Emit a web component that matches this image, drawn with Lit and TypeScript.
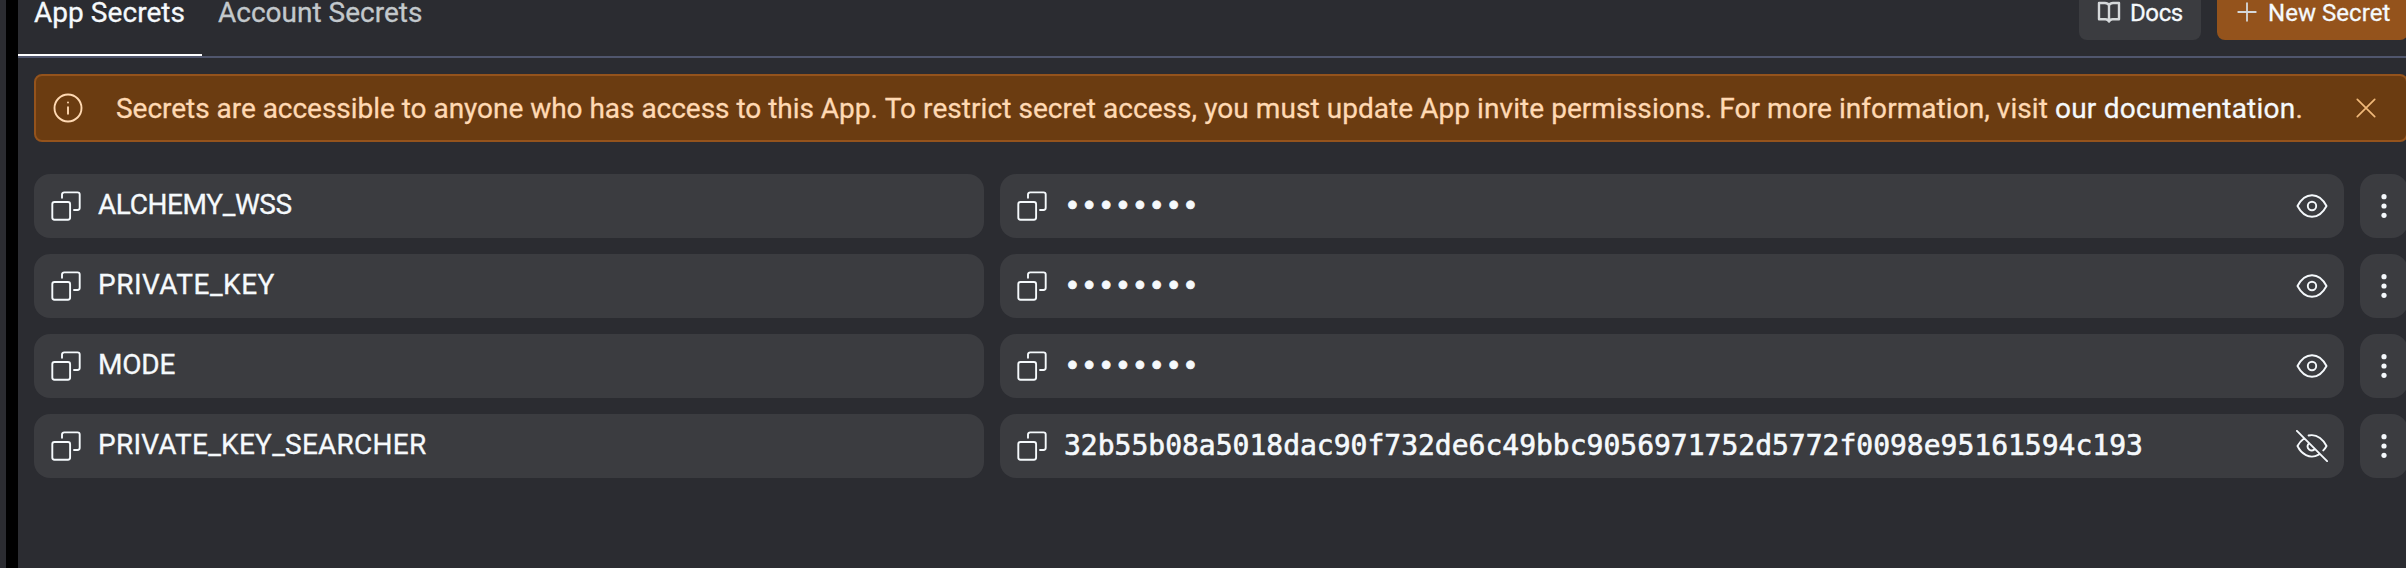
import { LitElement, html, css, svg } from "lit";
import { customElement, property } from "lit/decorators.js";
import { styleMap } from "lit/directives/style-map.js";

const shapes = {
  copy: svg`<path d="M12 7.7V4.6a2.2 2.2 0 0 1 2.2-2.2h13.3a2.2 2.2 0 0 1 2.2 2.2v13.2a2.2 2.2 0 0 1-2.2 2.2H24"/><rect x="2.3" y="12" width="17.8" height="17.8" rx="2.2"/>`,
  eye: svg`<path d="M1.5 16C4 11.2 9 5.2 16 5.2S28 11.2 30.5 16C28 20.8 23 26.8 16 26.8S4 20.8 1.5 16Z"/><circle cx="16" cy="16" r="4.2"/>`,
  eyeOff: svg`<path d="M.9.9 31.1 31.1M12.6 5.5C21.6 3.4 28 10.6 30.5 16c-.8 1.6-1.8 3-3.2 4.4M8 8.4C5 10.6 2.8 13.4 1.5 16 5 23.4 13.6 30 22.7 24.6M12.2 14.2a4.2 4.2 0 0 0 6.2 5.4"/>`,
  info: svg`<circle cx="16" cy="16" r="13.5"/><path d="M16 15.2v6.6M16 10.4v.1"/>`,
  close: svg`<path d="m7.3 7.3 17.4 17.4M24.7 7.3 7.3 24.7"/>`,
  book: svg`<path transform="scale(1.3333)" d="M12 5.2C11.2 3.6 9.8 3 8 3H2v16.2h6.4c1.8 0 3 .8 3.6 2.4.6-1.6 1.8-2.4 3.6-2.4H22V3h-6c-1.8 0-3.2.6-4 2.2v16"/>`,
  plus: svg`<path d="M16 4.3v23.4M4.3 16h23.4"/>`,
  dots: svg`<g fill="currentColor" stroke="none"><circle cx="16" cy="6.7" r="2.6"/><circle cx="16" cy="16" r="2.6"/><circle cx="16" cy="25.3" r="2.6"/></g>`,
};
type IconName = keyof typeof shapes;

@customElement("ui-icon")
class UiIcon extends LitElement {
  @property() name: IconName = "copy";
  static styles = css`
    :host { display: block; width: 32px; height: 32px; flex: none; }
    svg { display: block; width: 100%; height: 100%; fill: none; stroke: currentColor;
      stroke-width: var(--stroke, 1.9); stroke-linecap: round; stroke-linejoin: round; }
  `;
  render() {
    return html`<svg viewBox="0 0 32 32">${shapes[this.name]}</svg>`;
  }
}

@customElement("secret-row")
class SecretRow extends LitElement {
  @property() name = "";
  @property() value = "";
  @property({ type: Number }) tracking = 0;
  static styles = css`
    :host { display: grid; grid-template-columns: 950px 1fr 48px; gap: 16px; height: 64px; }
    .cell { display: flex; align-items: center; box-sizing: border-box; padding: 0 16px;
      border-radius: 16px; background: #3b3c40; min-width: 0; }
    .text { flex: 1; padding: 0 0 3px 16px; line-height: 33px; white-space: nowrap; }
    .mono { padding: 0 0 2px 16px; font-family: "DejaVu Sans Mono", monospace; -webkit-text-stroke: 0.6px currentColor; }
    .menu { justify-content: center; padding: 0; }
  `;
  render() {
    return html`
      <div class="cell">
        <ui-icon name="copy"></ui-icon>
        <span class="text" style=${styleMap({ letterSpacing: `${this.tracking}px` })}>${this.name}</span>
      </div>
      <div class="cell">
        <ui-icon name="copy"></ui-icon>
        <span class="text mono">${this.value || "••••••••"}</span>
        <ui-icon name=${this.value ? "eyeOff" : "eye"}></ui-icon>
      </div>
      <div class="cell menu"><ui-icon name="dots"></ui-icon></div>
    `;
  }
}

const secrets = [
  { name: "ALCHEMY_WSS", value: "", tracking: -0.4 },
  { name: "PRIVATE_KEY", value: "", tracking: 0.5 },
  { name: "MODE", value: "", tracking: -0.2 },
  { name: "PRIVATE_KEY_SEARCHER", value: "32b55b08a5018dac90f732de6c49bbc9056971752d5772f0098e95161594c193", tracking: 0.25 },
];

@customElement("app-root")
class AppRoot extends LitElement {
  static styles = css`
    :host { display: flex; height: 568px; overflow: hidden; background: #2b2c31; color: #f5f9fc;
      font: 28px/33px Roboto, sans-serif; -webkit-text-stroke: 0.3px currentColor; }
    .divider { flex: none; width: 12px; margin-left: 6px; background: #000; }
    .main { flex: 1; min-width: 0; margin-right: -2px; }
    .header { display: flex; justify-content: space-between; box-sizing: border-box; height: 58px;
      border-bottom: 2px solid #50566d; }
    .tabs { display: flex; }
    .tab { box-sizing: border-box; height: 56px; padding: 0 16px; line-height: 25px; color: #c2c8cc; white-space: nowrap; }
    .tab.active { width: 184px; border-bottom: 2px solid #fff; color: #f5f9fc; letter-spacing: 0.05px; }
    .actions { display: flex; gap: 16px; margin-top: -16px; height: 56px; }
    .button { display: flex; align-items: center; gap: 9px; box-sizing: border-box; padding: 0 18px;
      border-radius: 8px; background: #3b3c40; font-size: 24px; line-height: 28px; white-space: nowrap; }
    .button.docs { width: 122px; letter-spacing: -0.4px; }
    .button.primary { width: 191px; background: #94531c; letter-spacing: 0.05px; }
    .button ui-icon { width: 24px; height: 24px; color: #d5d8da; --stroke: 2.4; }
    .label { padding-top: 2px; }
    .body { padding: 16px 0 0 16px; }
    .banner { display: flex; align-items: center; box-sizing: border-box; height: 68px; padding: 0 24px 0 16px;
      border: 2px solid #94531c; border-radius: 8px; background: #6b3c11; color: #ffd9b3; }
    .message { flex: 1; padding-left: 32px; letter-spacing: 0.06px; white-space: nowrap; }
    .lead { letter-spacing: -0.03px; }
    .link { color: #f5f9fc; letter-spacing: 0.25px; }
    .close { color: #f0b879; --stroke: 1.7; }
    .list { display: grid; gap: 16px; margin-top: 32px; }
  `;
  render() {
    return html`
      <div class="divider"></div>
      <div class="main">
        <div class="header">
          <div class="tabs">
            <div class="tab active">App Secrets</div>
            <div class="tab">Account Secrets</div>
          </div>
          <div class="actions">
            <div class="button docs"><ui-icon name="book"></ui-icon><span class="label">Docs</span></div>
            <div class="button primary"><ui-icon name="plus"></ui-icon><span class="label">New Secret</span></div>
          </div>
        </div>
        <div class="body">
          <div class="banner">
            <ui-icon name="info"></ui-icon>
            <span class="message"><span class="lead">Secrets are accessible to anyone who has access to this App. </span>To restrict secret access, you must update App invite permissions. For more information, visit <span class="link">our documentation</span>.</span>
            <ui-icon class="close" name="close"></ui-icon>
          </div>
          <div class="list">
            ${secrets.map((s) => html`<secret-row .name=${s.name} .value=${s.value} .tracking=${s.tracking}></secret-row>`)}
          </div>
        </div>
      </div>
    `;
  }
}
